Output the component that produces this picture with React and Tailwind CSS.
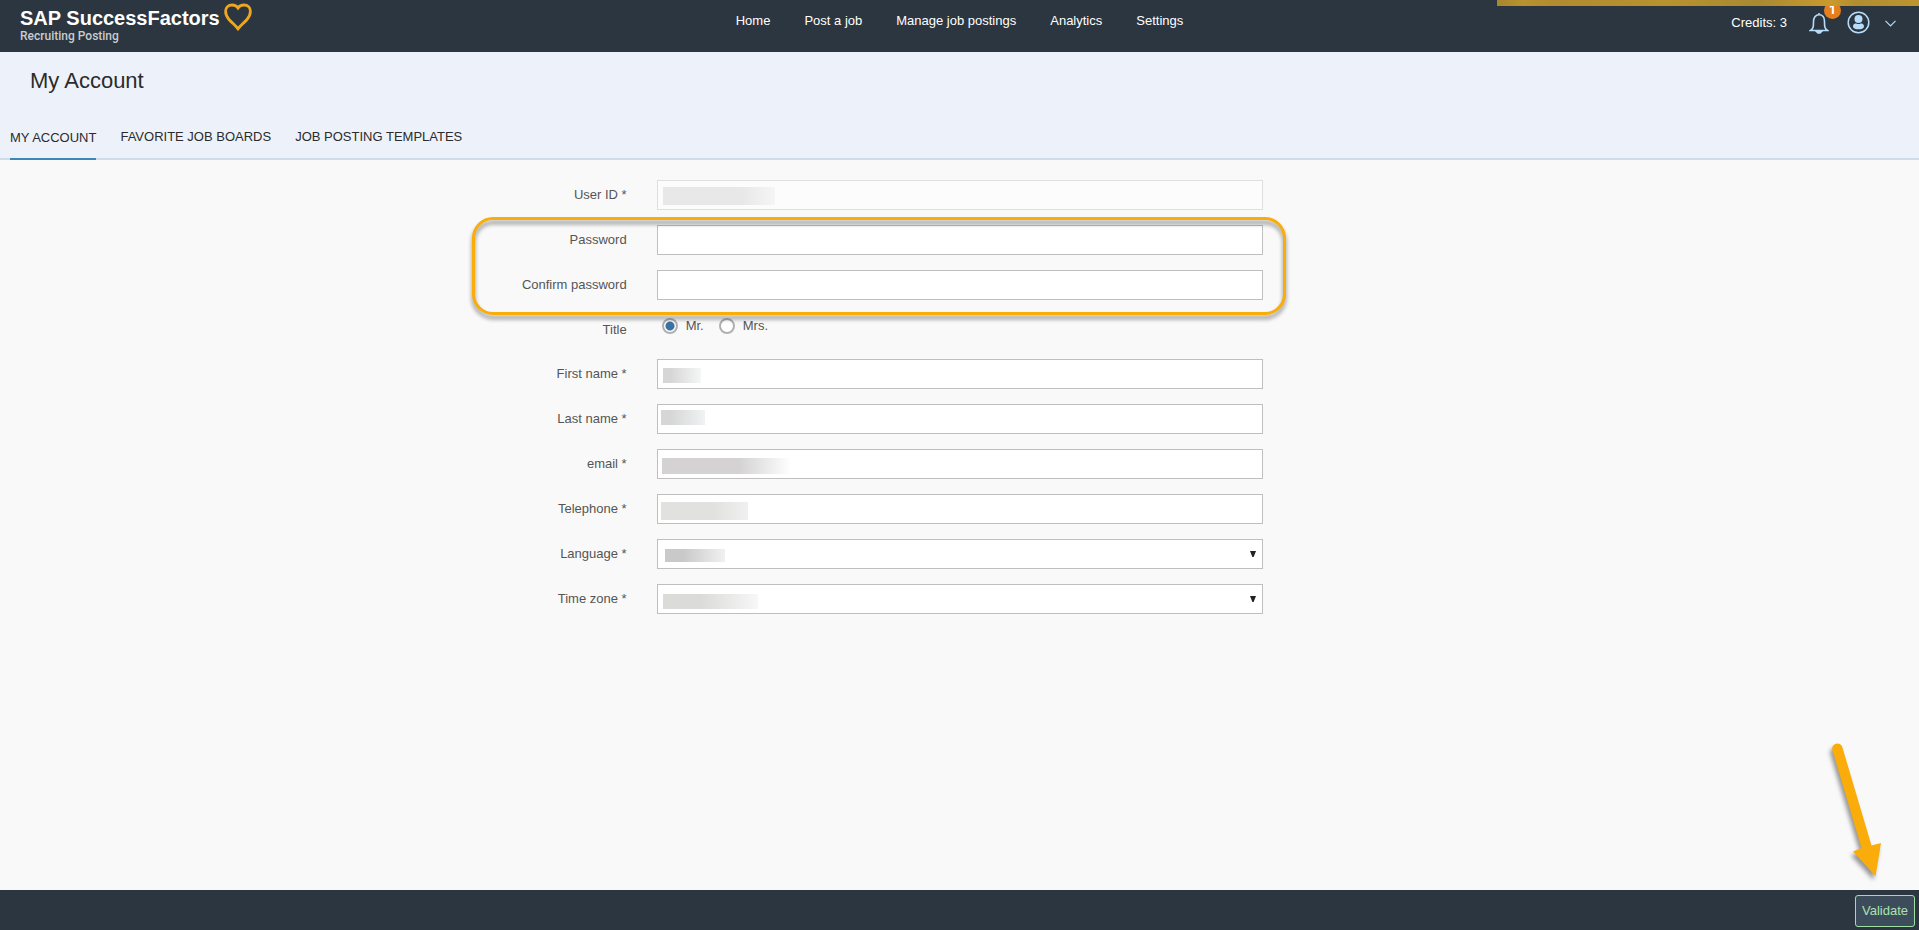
import React from "react";

const navItems = ["Home", "Post a job", "Manage job postings", "Analytics", "Settings"];

const label = "pr-[13px] text-right leading-[30px]";
const box = "block h-[30px] w-full rounded-none border border-[#bfbfbf] bg-white px-2 outline-none";

function Row({ id, text, children }) {
  return (
    <div className="grid grid-cols-3">
      <label htmlFor={id} className={label}>{text}</label>
      <div className="relative pl-[17px] pr-4">{children}</div>
    </div>
  );
}

function Mask({ className }) {
  return <span className={"pointer-events-none absolute bg-linear-to-r " + className} />;
}

function SelectBox({ id }) {
  return (
    <>
      <select id={id} className={box + " appearance-none"} defaultValue="">
        <option value=""></option>
      </select>
      <svg className="pointer-events-none absolute right-[23px] top-3" width="6" height="6" viewBox="0 0 6 6">
        <path d="M0 0H6L3.6 6H2.4Z" fill="#222" />
      </svg>
    </>
  );
}

function Header() {
  return (
    <header className="relative grid h-[52px] grid-cols-[1fr_auto_1fr] bg-[#2c3640] text-[13px] text-white">
      <div className="flex items-start pl-5">
        <div className="pt-[7px]">
          <div className="text-[20px] font-bold leading-[22px]">SAP SuccessFactors</div>
          <div className="font-[Roboto,sans-serif] text-[12px] font-medium leading-[14px] text-[#c8ccd0]">Recruiting Posting</div>
        </div>
        <svg className="ml-1 mt-[3px]" width="28" height="28" viewBox="0 0 28 28" fill="none" stroke="#efa61f" strokeWidth="2.8">
          <path d="M14 25.800C11.500 22.500 8 20 5 16.500C2.600 13.700 1.600 11.300 1.600 8.300C1.600 4.500 4.300 2 8 2C10.500 2 12.800 3 14 4.900C15.200 3 17.500 2 20 2C23.700 2 26.400 4.500 26.400 8.300C26.400 11.300 25.400 13.700 23 16.500C20 20 16.500 22.500 14 25.800Z" />
        </svg>
      </div>
      <nav className="flex gap-[34px] pt-[13px] leading-4">
        {navItems.map((n) => <a key={n} href="#">{n}</a>)}
      </nav>
      <div className="flex items-start justify-end pr-[23px]">
        <span className="pt-[15px] leading-4">Credits: 3</span>
        <button aria-label="Notifications" className="relative ml-[22px] mt-3">
          <svg width="20" height="22" viewBox="0 0 20 22" fill="none" stroke="#b5dcf8" strokeWidth="1.6">
            <path d="M1.500 18.500C4.500 16.500 4.500 14 4.500 9.500C4.500 5.500 6.500 2.800 10 2.800C13.500 2.800 15.500 5.500 15.500 9.500C15.500 14 15.500 16.500 18.500 18.500Z" />
            <path d="M10 1V2.500M7.500 19.500H12.500L11 21H9Z" />
          </svg>
          <span className="absolute -top-[10px] left-[15px] size-[17px] rounded-full bg-[#e57f1e] text-center font-[Roboto,sans-serif] text-[13px] font-bold leading-[16px]">1</span>
        </button>
        <button aria-label="Profile" className="ml-[18px] mt-[11px]">
          <svg width="23" height="23" viewBox="0 0 23 23">
            <circle cx="11.500" cy="11.500" r="10.300" fill="none" stroke="#b5dcf8" strokeWidth="1.500" />
            <circle cx="11.500" cy="7.900" r="4" fill="#b5dcf8" />
            <path d="M6 15.500C6 12.800 8 12.400 9.200 12.400Q11.500 13.600 13.800 12.400C15 12.400 17 12.800 17 15.500C17 17.500 14 18.300 11.500 18.300C9 18.300 6 17.500 6 15.500Z" fill="#b5dcf8" />
          </svg>
        </button>
        <button aria-label="Open menu" className="ml-[15px] mt-5">
          <svg width="11" height="7" viewBox="0 0 11 7" fill="none" stroke="#b5dcf8" strokeWidth="1.200"><path d="M0.500 0.800L5.500 5.800L10.500 0.800" /></svg>
        </button>
      </div>
      <div className="absolute right-0 top-0 h-[6px] w-[22%] bg-[linear-gradient(90deg,#a8862f_0%,#b8922e_6%,#b08b30_15%,#b8922e_40%,#a88932_62%,#cb9a2d_79%,#b08d30_85%,#bd952f_100%)]" />
    </header>
  );
}

export default function App() {
  return (
    <div className="flex min-h-screen flex-col bg-[#f9f9f9] font-['Liberation_Sans',Arial,sans-serif] text-[13px] text-[#555]">
      <Header />
      <section className="flex h-[108px] flex-col justify-between border-b-2 border-[#cddceb] bg-[#edf2fa] text-[#2b2b2b]">
        <h1 className="pl-[30px] pt-[17px] text-[22px] leading-6">My Account</h1>
        <div className="-mb-[2px] flex gap-6 pl-[10px] leading-4">
          <a href="#" className="border-b-2 border-[#3f86b8] pb-[12px] pt-px">MY ACCOUNT</a>
          <a href="#">FAVORITE JOB BOARDS</a>
          <a href="#">JOB POSTING TEMPLATES</a>
        </div>
      </section>
      <main className="relative flex-1 pt-5">
        <form id="account" className="flex flex-col gap-[15px]">
          <Row id="user" text="User ID *">
            <input id="user" disabled className="block h-[30px] w-full border border-[#dfdfdf] bg-[#fcfcfc]" />
            <Mask className="left-[23px] top-[7px] h-[18px] w-28 from-[#e8e8e8] from-70% to-[#f5f5f5]" />
          </Row>
          <div className="relative flex flex-col gap-[15px]">
            <Row id="pw" text="Password"><input id="pw" type="password" className={box} /></Row>
            <Row id="pw2" text="Confirm password"><input id="pw2" type="password" className={box} /></Row>
            <div className="pointer-events-none absolute -bottom-[15px] -top-2 left-[24.6%] right-[33%] rounded-[21px] border-[3px] border-[#f9ac0a] drop-shadow-[0_4px_2px_rgba(0,0,0,0.45)]" />
          </div>
          <div role="radiogroup" aria-label="Title" className="-mb-px grid grid-cols-3">
            <span className={label}>Title</span>
            <div className="flex h-[22px] items-center pl-[22px]">
              <input id="mr" type="radio" name="title" defaultChecked className="size-4 appearance-none rounded-full border-2 border-[#b0b0b0] bg-white bg-radial from-[#3a72a3] from-[4px] to-white to-[5px]" />
              <label htmlFor="mr" className="pl-2">Mr.</label>
              <input id="mrs" type="radio" name="title" className="ml-[15px] size-4 appearance-none rounded-full border-2 border-[#b0b0b0] bg-white" />
              <label htmlFor="mrs" className="pl-2">Mrs.</label>
            </div>
          </div>
          <Row id="fn" text="First name *">
            <input id="fn" className={box} />
            <Mask className="left-[23px] top-[9px] h-[15px] w-[38px] from-[#d6d6d7] from-20% to-[#f5f6f6]" />
          </Row>
          <Row id="ln" text="Last name *">
            <input id="ln" className={box} />
            <Mask className="left-[21px] top-[6px] h-[15px] w-11 from-[#d6d6d6] from-20% to-[#f0f2f3]" />
          </Row>
          <Row id="em" text="email *">
            <input id="em" type="email" className={box} />
            <Mask className="left-[22px] top-[9px] h-4 w-[127px] from-[#d4d2d2] from-60% to-[#fdfdfd]" />
          </Row>
          <Row id="tel" text="Telephone *">
            <input id="tel" type="tel" className={box} />
            <Mask className="left-[21px] top-2 h-[18px] w-[87px] from-[#e1e1df] from-60% to-[#f0f0f0]" />
          </Row>
          <Row id="lang" text="Language *">
            <SelectBox id="lang" />
            <Mask className="left-[25px] top-[10px] h-[13px] w-[60px] from-[#cac9ca] from-30% to-[#f1f1f2]" />
          </Row>
          <Row id="tz" text="Time zone *">
            <SelectBox id="tz" />
            <Mask className="left-[23px] top-[10px] h-[15px] w-[95px] from-[#dbdbda] from-40% to-[#f7f7f7]" />
          </Row>
        </form>
        <svg className="pointer-events-none absolute bottom-3 right-7 drop-shadow-[-2px_4px_2px_rgba(0,0,0,0.4)]" width="60" height="140" viewBox="0 0 60 140">
          <path d="M1.300 11.800A5.200 5.200 0 0 1 11.300 9L40.500 107.500L50 105L44.500 138L22 113.500L30.500 110Z" fill="#f9ac0a" />
        </svg>
      </main>
      <footer className="flex h-10 items-end justify-end bg-[#2c3640] pb-[3px] pr-1">
        <button form="account" type="button" className="h-8 w-[60px] rounded-[3px] border border-[#a0dfa3] bg-[#3d4c5a] text-[#abe2ad]">Validate</button>
      </footer>
    </div>
  );
}
